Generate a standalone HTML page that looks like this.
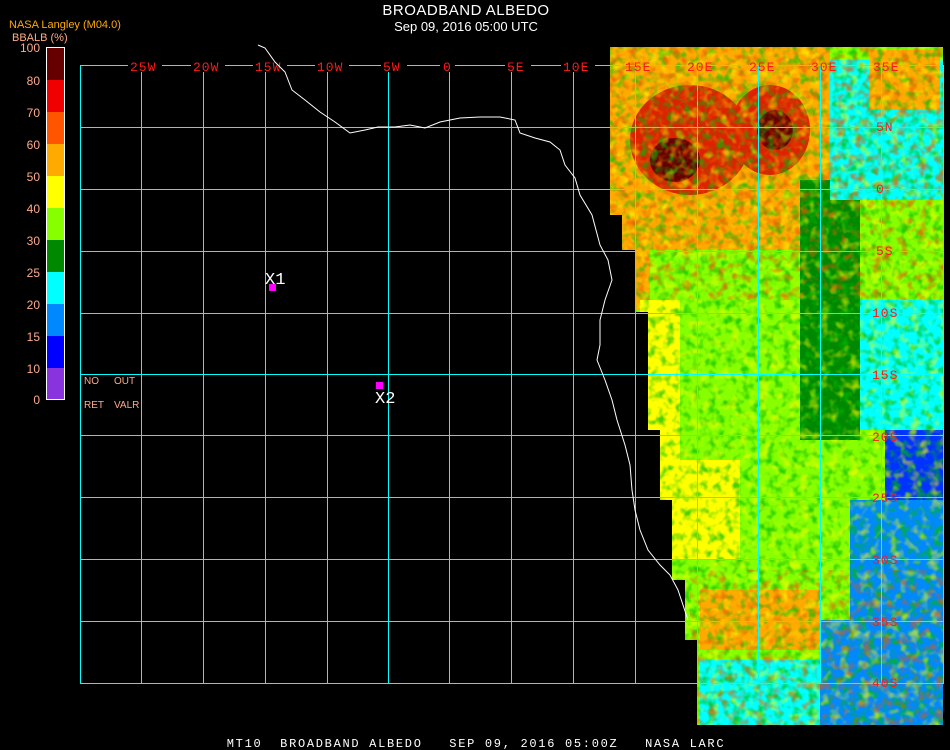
<!DOCTYPE html>
<html><head><meta charset="utf-8"><style>
body{margin:0;background:#000;width:950px;height:750px;overflow:hidden}
svg{display:block}
</style></head><body>
<svg width="950" height="750" viewBox="0 0 950 750" xmlns="http://www.w3.org/2000/svg" shape-rendering="crispEdges">
<defs>
<clipPath id="d"><polygon points="610,47 943,47 943,725 697,725 697,640 685,640 685,580 672,580 672,500 660,500 660,430 648,430 648,312 635,312 635,250 622,250 622,215 610,215"/></clipPath>
<filter id="n1" x="0" y="0" width="1" height="1"><feTurbulence type="fractalNoise" baseFrequency="0.12" numOctaves="2" seed="3"/><feColorMatrix type="matrix" values="0 0 0 0 0  0 0 0 0 0.5  0 0 0 0 0  0 0 0 3 -1.4"/></filter>
<filter id="n2" x="0" y="0" width="1" height="1"><feTurbulence type="fractalNoise" baseFrequency="0.1" numOctaves="2" seed="8"/><feColorMatrix type="matrix" values="0 0 0 0 1  0 0 0 0 1  0 0 0 0 0  0 0 0 3 -1.5"/></filter>
<filter id="n3" x="0" y="0" width="1" height="1"><feTurbulence type="fractalNoise" baseFrequency="0.11" numOctaves="2" seed="15"/><feColorMatrix type="matrix" values="0 0 0 0 0.8  0 0 0 0 0.1  0 0 0 0 0  0 0 0 3 -1.5"/></filter>
<mask id="top"><rect x="600" y="40" width="350" height="260" fill="#fff"/></mask>
<mask id="bot"><rect x="690" y="570" width="260" height="170" fill="#fff"/></mask>
</defs>
<g clip-path="url(#d)" shape-rendering="auto">
<rect x="600" y="40" width="350" height="700" fill="#88ff00"/>
<rect x="600" y="40" width="230" height="210" fill="#ffaa00"/>
<ellipse cx="690" cy="140" rx="60" ry="55" fill="#dd2200"/>
<ellipse cx="675" cy="160" rx="25" ry="22" fill="#660000"/>
<ellipse cx="770" cy="130" rx="40" ry="45" fill="#dd2200"/>
<ellipse cx="775" cy="130" rx="18" ry="20" fill="#660000"/>
<rect x="610" y="230" width="40" height="80" fill="#ffaa00"/>
<rect x="640" y="300" width="40" height="250" fill="#ffff00"/>
<rect x="670" y="460" width="70" height="100" fill="#ffff00"/>
<rect x="800" y="180" width="60" height="260" fill="#008800"/>
<rect x="830" y="60" width="120" height="140" fill="#00ffff"/>
<rect x="870" y="50" width="70" height="60" fill="#ffaa00"/>
<rect x="860" y="200" width="90" height="100" fill="#88ff00"/>
<rect x="860" y="300" width="90" height="130" fill="#00ffff"/>
<rect x="885" y="430" width="65" height="80" fill="#0033ff"/>
<rect x="850" y="500" width="100" height="120" fill="#0088ff"/>
<rect x="700" y="590" width="120" height="60" fill="#ffaa00"/>
<rect x="820" y="620" width="130" height="110" fill="#0088ff"/>
<rect x="700" y="660" width="120" height="70" fill="#00ffff"/>
<rect x="600" y="40" width="350" height="700" filter="url(#n1)" opacity="0.7"/>
<rect x="600" y="40" width="350" height="700" filter="url(#n2)" opacity="0.6"/>
<rect x="600" y="40" width="350" height="700" filter="url(#n3)" opacity="0.7" mask="url(#top)"/>
<rect x="600" y="40" width="350" height="700" filter="url(#n3)" opacity="0.6" mask="url(#bot)"/>
</g>
<g fill="#00ffff">
<rect x="80" y="65" width="1" height="619"/><rect x="141" y="65" width="1" height="619"/><rect x="203" y="65" width="1" height="619"/><rect x="265" y="65" width="1" height="619"/><rect x="327" y="65" width="1" height="619"/><rect x="388" y="65" width="1" height="619"/><rect x="449" y="65" width="1" height="619"/><rect x="511" y="65" width="1" height="619"/><rect x="573" y="65" width="1" height="619"/><rect x="635" y="65" width="1" height="619"/><rect x="697" y="65" width="1" height="619"/><rect x="758" y="65" width="1" height="619"/><rect x="820" y="65" width="1" height="619"/><rect x="881" y="65" width="1" height="619"/><rect x="943" y="65" width="1" height="619"/>
<rect x="80" y="65" width="864" height="1"/><rect x="80" y="127" width="864" height="1"/><rect x="80" y="189" width="864" height="1"/><rect x="80" y="251" width="864" height="1"/><rect x="80" y="313" width="864" height="1"/><rect x="80" y="374" width="864" height="1"/><rect x="80" y="435" width="864" height="1"/><rect x="80" y="497" width="864" height="1"/><rect x="80" y="559" width="864" height="1"/><rect x="80" y="621" width="864" height="1"/><rect x="80" y="683" width="864" height="1"/>
</g>
<g fill="#000"><rect x="128" y="60" width="34" height="12"/><rect x="191" y="60" width="34" height="12"/><rect x="253" y="60" width="34" height="12"/><rect x="315" y="60" width="34" height="12"/><rect x="381" y="60" width="26" height="12"/><rect x="440" y="60" width="15" height="12"/><rect x="505" y="60" width="26" height="12"/><rect x="561" y="60" width="34" height="12"/></g>
<g fill="#ff1a1a" font-size="13" font-family="Liberation Mono,monospace" letter-spacing="1"><text x="130" y="71">25W</text><text x="193" y="71">20W</text><text x="255" y="71">15W</text><text x="317" y="71">10W</text><text x="383" y="71">5W</text><text x="443" y="71">0</text><text x="507" y="71">5E</text><text x="563" y="71">10E</text><text x="625" y="71">15E</text><text x="687" y="71">20E</text><text x="749" y="71">25E</text><text x="811" y="71">30E</text><text x="873" y="71">35E</text>
<text x="876" y="131">5N</text><text x="876" y="193">0</text><text x="876" y="255">5S</text><text x="872" y="317">10S</text><text x="872" y="379">15S</text><text x="872" y="441">20S</text><text x="872" y="502">25S</text><text x="872" y="564">30S</text><text x="872" y="626">35S</text><text x="872" y="687">40S</text></g>
<polyline fill="none" stroke="#fff" stroke-width="1" shape-rendering="auto" points="258,45 265,48 275,62 285,72 292,90 305,100 320,112 335,122 350,133 365,130 378,127 395,127 410,125 425,128 440,122 460,118 480,117 500,117 515,120 520,133 535,138 550,142 560,150 565,165 575,178 580,195 592,215 600,245 608,260 612,280 605,300 600,320 600,345 597,360 605,380 612,400 617,420 625,445 630,465 632,490 635,510 640,530 648,550 660,565 670,575 678,590 683,605 688,620"/>
<g fill="#ff00ff"><rect x="269" y="284" width="7" height="7"/><rect x="376" y="382" width="7" height="7"/></g>
<g fill="#fff" font-size="17" font-family="Liberation Mono,monospace"><text x="265" y="284">X1</text><text x="375" y="403">X2</text></g>
<g fill="#fff" text-anchor="middle" font-family="Liberation Sans,sans-serif"><text x="466" y="15" font-size="15" letter-spacing="0.5">BROADBAND ALBEDO</text><text x="466" y="31" font-size="13">Sep 09, 2016 05:00 UTC</text></g>
<text x="9" y="28" fill="#ffaa00" font-size="11" font-family="Liberation Sans,sans-serif">NASA Langley (M04.0)</text>
<text x="12" y="41" fill="#ffaa88" font-size="11" font-family="Liberation Sans,sans-serif">BBALB (%)</text>
<rect x="46" y="47" width="19" height="353" fill="#fff"/>
<rect x="47" y="48" width="17" height="32" fill="#660000"/><rect x="47" y="80" width="17" height="32" fill="#f00000"/><rect x="47" y="112" width="17" height="32" fill="#ff5500"/><rect x="47" y="144" width="17" height="32" fill="#ffaa00"/><rect x="47" y="176" width="17" height="32" fill="#ffff00"/><rect x="47" y="208" width="17" height="32" fill="#88ff00"/><rect x="47" y="240" width="17" height="32" fill="#008800"/><rect x="47" y="272" width="17" height="32" fill="#00ffff"/><rect x="47" y="304" width="17" height="32" fill="#0088ff"/><rect x="47" y="336" width="17" height="32" fill="#0000ff"/><rect x="47" y="368" width="17" height="31" fill="#8833dd"/>
<g fill="#ffaa88" font-size="12" text-anchor="end" font-family="Liberation Sans,sans-serif"><text x="40" y="52">100</text><text x="40" y="85">80</text><text x="40" y="117">70</text><text x="40" y="149">60</text><text x="40" y="181">50</text><text x="40" y="213">40</text><text x="40" y="245">30</text><text x="40" y="277">25</text><text x="40" y="309">20</text><text x="40" y="341">15</text><text x="40" y="373">10</text><text x="40" y="404">0</text></g>
<g fill="#ffaa88" font-size="10" font-family="Liberation Sans,sans-serif"><text x="84" y="384">NO</text><text x="114" y="384">OUT</text><text x="84" y="408">RET</text><text x="114" y="408">VALR</text></g>
<text x="476" y="747" fill="#fff" font-size="12" text-anchor="middle" font-family="Liberation Mono,monospace" letter-spacing="1.7" xml:space="preserve">MT10  BROADBAND ALBEDO   SEP 09, 2016 05:00Z   NASA LARC</text>
</svg>
</body></html>
